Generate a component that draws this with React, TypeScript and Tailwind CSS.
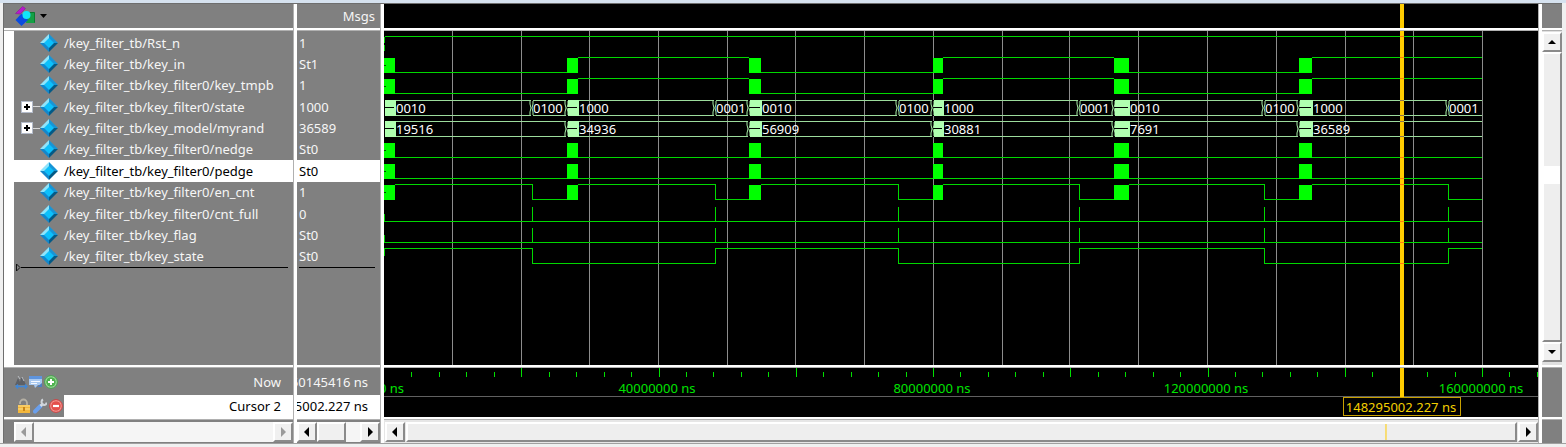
import React from "react";

type Signal = { name: string; value: string; bus?: boolean; selected?: boolean };

const SIGNALS: Signal[] = [
  { name: "/key_filter_tb/Rst_n", value: "1" },
  { name: "/key_filter_tb/key_in", value: "St1" },
  { name: "/key_filter_tb/key_filter0/key_tmpb", value: "1" },
  { name: "/key_filter_tb/key_filter0/state", value: "1000", bus: true },
  { name: "/key_filter_tb/key_model/myrand", value: "36589", bus: true },
  { name: "/key_filter_tb/key_filter0/nedge", value: "St0" },
  { name: "/key_filter_tb/key_filter0/pedge", value: "St0", selected: true },
  { name: "/key_filter_tb/key_filter0/en_cnt", value: "1" },
  { name: "/key_filter_tb/key_filter0/cnt_full", value: "0" },
  { name: "/key_filter_tb/key_flag", value: "St0" },
  { name: "/key_filter_tb/key_state", value: "St0" },
];

/* Waveform data, in drawing units from time zero. */
const END = 1098;
const CURSOR = 1016;
const BURSTS: [number, number][] = [[0, 11], [183, 194], [365, 377], [549, 559], [730, 745], [915, 928]];
const SHIFTS = [148, 331, 514, 695, 880, 1064];
const RANDS = ["19516", "34936", "56909", "30881", "7691", "36589"];
const GRID = [68, 137, 205, 274, 343, 411, 480, 549, 618, 685, 754, 823, 892, 961, 1029, 1098];

const nextBurst = (i: number) => (i + 1 < BURSTS.length ? BURSTS[i + 1][0] : END);

/* ---------- icons ---------- */

function Diamond() {
  return (
    <svg className="h-[18px] w-[18px] shrink-0" viewBox="0 0 18 18" aria-hidden="true">
      <path d="M9 0L0 9h9z" fill="#8fe4fb" />
      <path d="M9 0l9 9H9z" fill="#1795d6" />
      <path d="M0 9l9 9V9z" fill="#1287cc" />
      <path d="M18 9l-9 9V9z" fill="#045a86" />
      <path d="M9 4l5 5-5 5-5-5z" fill="#0cc0fb" />
    </svg>
  );
}

function WaveLogo() {
  return (
    <svg className="h-5 w-[21px]" viewBox="0 0 21 20" aria-hidden="true">
      <path d="M0.500 7.500L7.500 0.500l3 2L5 8z" fill="#b818cc" stroke="#8a1a99" strokeWidth="0.600" />
      <path d="M13 6.500h7V17h-9z" fill="#15a045" />
      <path d="M13 6.500h6.500v10" fill="none" stroke="#0a7a30" />
      <path d="M0.500 14L6.500 7.500 13 14l-6.500 6z" fill="#0a4be0" />
      <circle cx="11.500" cy="9" r="4" fill="#10e6fa" />
    </svg>
  );
}

function SearchMark() {
  return (
    <svg className="h-4 w-[13px]" viewBox="0 0 13 16" aria-hidden="true">
      <path d="M0 11l3-7 2 4 1-4h2l3 7z" fill="#5d6066" />
      <path d="M3 2l2 3M7 3l2 4" stroke="#b8bcc2" />
      <path d="M1 12.500h10M3 10.500l-2 2 2 2M10 10.500l2 2-2 2" stroke="#3f87d8" fill="none" strokeWidth="1.300" />
    </svg>
  );
}

function NoteMark() {
  return (
    <svg className="h-4 w-[14px]" viewBox="0 0 14 16" aria-hidden="true">
      <path d="M0 2h13v9H9l-3 3-1-3H0z" fill="#a9c9f0" />
      <path d="M0 2h13v3H0z" fill="#5e94dd" />
      <path d="M2 7.500h9M2 9.500h6" stroke="#f5f9ff" />
      <path d="M8 13l5-4v4z" fill="#4c7fc4" />
    </svg>
  );
}

function PlusMark() {
  return (
    <svg className="h-[14px] w-[14px]" viewBox="0 0 14 14" aria-hidden="true">
      <circle cx="7" cy="7" r="6.300" fill="#a9d8a5" stroke="#3fa847" />
      <circle cx="7" cy="7" r="4.800" fill="#4fb24f" />
      <path d="M7 4v6M4 7h6" stroke="#fff" strokeWidth="2" />
    </svg>
  );
}

function LockMark() {
  return (
    <svg className="h-4 w-[14px]" viewBox="0 0 14 16" aria-hidden="true">
      <path d="M3 6V5a3.500 3.500 0 0 1 7 0v3" fill="none" stroke="#b5b0a4" strokeWidth="1.800" />
      <path d="M1 7h12v8H1z" fill="#f3b73c" />
      <path d="M1 8h12M1 11h12" stroke="#ffe08a" />
      <path d="M6 9h2v4H6z" fill="#c98518" />
    </svg>
  );
}

function WrenchMark() {
  return (
    <svg className="h-4 w-[14px]" viewBox="0 0 14 16" aria-hidden="true">
      <path d="M2 13.500L7.500 8" stroke="#6a9fec" strokeWidth="4" strokeLinecap="round" />
      <path d="M7.500 8l2.500-2.500" stroke="#d9dde2" strokeWidth="2.500" />
      <path d="M10 1.500c-2 1-2 4 0 5s3.500 0 3.500-2" fill="none" stroke="#cfd4da" strokeWidth="2" />
    </svg>
  );
}

function MinusMark() {
  return (
    <svg className="h-[14px] w-[14px]" viewBox="0 0 14 14" aria-hidden="true">
      <circle cx="7" cy="7" r="6.300" fill="#f0a09a" stroke="#d8393a" />
      <circle cx="7" cy="7" r="4.800" fill="#e4504c" />
      <path d="M4 7h6" stroke="#fff" strokeWidth="2.200" />
    </svg>
  );
}

const ARROWS = {
  left: "M6 0v10L1 5z",
  right: "M2 0v10l5-5z",
  up: "M0 7h8L4 3z",
  down: "M0 3h8L4 7z",
};

function ScrollButton({ dir, label, disabled }: { dir: keyof typeof ARROWS; label: string; disabled?: boolean }) {
  return (
    <button
      type="button"
      aria-label={label}
      disabled={disabled}
      className="flex h-5 w-5 shrink-0 items-center justify-center border-2 border-t-white border-r-[#8a8a8a] border-b-[#8a8a8a] border-l-white bg-[#f0f0f0] text-black disabled:text-[#9a9a9a]"
    >
      <svg className="h-[10px] w-2" viewBox="0 0 8 10" aria-hidden="true">
        <path d={ARROWS[dir]} fill="currentColor" />
      </svg>
    </button>
  );
}

/* ---------- layout helpers ---------- */

function HSash() {
  return <div className="h-[3px] shrink-0 border-b border-[#b0b0b0] bg-white" />;
}

function VSash() {
  return <div className="w-1 shrink-0 border-l border-[#b0b0b0] bg-white" />;
}

/* ---------- waveform drawing ---------- */

function H({ x1, x2, y, c = "#00d800" }: { x1: number; x2: number; y: number; c?: string }) {
  return <rect x={x1} y={y} width={x2 - x1} height={1} fill={c} />;
}

function V({ x, y1, y2, c = "#00d800" }: { x: number; y1: number; y2: number; c?: string }) {
  return <rect x={x} y={y1} width={1} height={y2 - y1} fill={c} />;
}

function BurstBlocks({ top, height = 15 }: { top: number; height?: number }) {
  return (
    <>
      {BURSTS.map(([a, b]) => (
        <rect key={a} x={a} y={top} width={b - a} height={height} fill="#00ff00" />
      ))}
      <rect x={0} y={top + 7} width={2} height={1} fill="#005000" />
    </>
  );
}

function KeyWave({ top }: { top: number }) {
  return (
    <>
      {BURSTS.map(([, b], i) => (
        <H key={b} x1={b} x2={nextBurst(i)} y={i % 2 ? top : top + 15} />
      ))}
      <BurstBlocks top={top + 1} />
    </>
  );
}

function EdgeWave({ top }: { top: number }) {
  return (
    <>
      <H x1={0} x2={END} y={top + 15} />
      <BurstBlocks top={top + 1} />
    </>
  );
}

function EnableWave({ top }: { top: number }) {
  return (
    <>
      {BURSTS.map(([, b], i) => (
        <g key={b}>
          <H x1={b} x2={SHIFTS[i]} y={top} />
          <V x={SHIFTS[i]} y1={top} y2={top + 16} />
          <H x1={SHIFTS[i]} x2={nextBurst(i)} y={top + 15} />
        </g>
      ))}
      <BurstBlocks top={top + 1} />
    </>
  );
}

function SpikeWave({ top }: { top: number }) {
  return (
    <>
      <H x1={0} x2={END} y={top + 15} />
      <V x={0} y1={top + 8} y2={top + 15} />
      {SHIFTS.map((x) => (
        <V key={x} x={x} y1={top + 1} y2={top + 15} />
      ))}
    </>
  );
}

function StateWave({ top }: { top: number }) {
  const edges = [0, ...SHIFTS, END];
  return (
    <>
      <V x={0} y1={top + 1} y2={top + 8} />
      {edges.slice(0, -1).map((x, i) => (
        <g key={x}>
          <H x1={x} x2={edges[i + 1]} y={i % 2 ? top + 15 : top} />
          {i > 0 && <V x={x} y1={top} y2={top + 16} />}
        </g>
      ))}
    </>
  );
}

function BusWave({ top, crossings, labels }: { top: number; crossings: number[]; labels: [number, string][] }) {
  return (
    <>
      <H x1={1} x2={END} y={top} c="#9cdc9c" />
      <H x1={1} x2={END} y={top + 15} c="#9cdc9c" />
      {crossings.map((x) => (
        <g key={x}>
          <rect x={x - 1} y={top} width={2} height={16} fill="#000" />
          <path
            d={`M${x - 2} ${top + 1}v3l1 4l-1 4v3M${x + 1} ${top + 1}v3l-1 4l1 4v3`}
            fill="none"
            stroke="#a8eea8"
          />
        </g>
      ))}
      {BURSTS.map(([a, b]) => (
        <g key={a}>
          <rect x={a + 1} y={top} width={b - a} height={16} fill="#b0ffb0" />
          <rect x={a} y={top + 7} width={b - a - 1} height={1} fill="#000" />
        </g>
      ))}
      {labels.map(([x, t]) => (
        <text key={x} x={x + 1} y={top + 13} className="text-[13px]" fill="#ffffff">
          {t}
        </text>
      ))}
    </>
  );
}

function Waveform() {
  const stateLabels: [number, string][] = BURSTS.flatMap(([, b], i) => [
    [b, i % 2 ? "1000" : "0010"] as [number, string],
    [SHIFTS[i], i % 2 ? "0001" : "0100"] as [number, string],
  ]);
  const randLabels = BURSTS.map(([, b], i) => [b, RANDS[i]] as [number, string]);
  return (
    <svg className="block h-[334px] w-full" role="img" aria-label="Waveforms">
      {GRID.map((x) => (
        <rect key={x} x={x} y={0} width={1} height="100%" fill="#8c8c8c" />
      ))}
      <H x1={1} x2={END} y={5} />
      <V x={0} y1={6} y2={12} />
      <V x={0} y1={14} y2={20} />
      <KeyWave top={26} />
      <KeyWave top={47} />
      <BusWave top={69} crossings={[...SHIFTS, ...BURSTS.slice(1).map((b) => b[0])]} labels={stateLabels} />
      <BusWave top={90} crossings={BURSTS.slice(1).map((b) => b[0])} labels={randLabels} />
      <EdgeWave top={111} />
      <EdgeWave top={132} />
      <EnableWave top={153} />
      <SpikeWave top={175} />
      <SpikeWave top={196} />
      <StateWave top={217} />
      <rect x={CURSOR} y={0} width={4} height="100%" fill="#ffcc00" />
      {[5, 26, 47, 126, 147, 153, 190, 211, 232].map((y) => (
        <rect key={y} x={CURSOR} y={y} width={4} height={1} fill="#ff7a10" />
      ))}
      {[69, 84, 90, 105].map((y) => (
        <rect key={y} x={CURSOR} y={y} width={4} height={1} fill="#8f7550" />
      ))}
    </svg>
  );
}

function Timeline() {
  const ticks = Array.from({ length: 42 }, (_, i) => i + 1);
  return (
    <svg className="block h-[49px] w-full" role="img" aria-label="Time axis">
      {ticks.map((i) => {
        const major = i % 5 === 0;
        return (
          <rect
            key={i}
            x={Math.round(i * 27.45)}
            y={major ? 0 : 4}
            width={1}
            height={major ? 9 : 5}
            fill="#00e000"
          />
        );
      })}
      <g className="text-[13px]" fill="#00e400">
        <text x={-5} y={25}>0 ns</text>
        <text x={273} y={25} textAnchor="middle">40000000 ns</text>
        <text x={548} y={25} textAnchor="middle">80000000 ns</text>
        <text x={822} y={25} textAnchor="middle">120000000 ns</text>
        <text x={1097} y={25} textAnchor="middle">160000000 ns</text>
      </g>
      <rect x={0} y={28} width="100%" height={1} fill="#606060" />
      <rect x={CURSOR} y={0} width={4} height={29} fill="#ffcc00" />
      <rect x={959.500} y={29.500} width={117} height={18} fill="#000" stroke="#c8a000" />
      <text x={1017} y={44} textAnchor="middle" className="text-[13px]" fill="#f4d000">
        148295002.227 ns
      </text>
    </svg>
  );
}

/* ---------- panes ---------- */

function NamesPane() {
  return (
    <section aria-label="Signals" className="flex w-[289px] shrink-0 flex-col">
      <header className="flex h-6 items-center pl-[11px]">
        <button type="button" aria-label="Wave menu" className="flex items-center gap-1">
          <WaveLogo />
          <svg className="h-1 w-[7px]" viewBox="0 0 7 4" aria-hidden="true">
            <path d="M0 0h7L3.500 4z" fill="#000" />
          </svg>
        </button>
      </header>
      <HSash />
      <div className="flex flex-1">
        <div className="w-[10px] shrink-0 bg-white" />
        <div className="flex-1 pt-px">
          <ul className="grid h-[235px] grid-rows-11">
            {SIGNALS.map((s) => (
              <li
                key={s.name}
                className={`flex items-center whitespace-nowrap ${s.selected ? "bg-white text-black" : ""}`}
              >
                <span className="flex w-[26px] items-center pl-[7px]">
                  {s.bus && (
                    <>
                      <button
                        type="button"
                        aria-label={`Expand ${s.name}`}
                        className="flex h-3 w-3 shrink-0 items-center justify-center border border-[#b4bccb] bg-white"
                      >
                        <svg className="h-[6px] w-[6px]" viewBox="0 0 6 6" aria-hidden="true">
                          <path d="M2 0h2v2h2v2H4v2H2V4H0V2h2z" fill="#000" />
                        </svg>
                      </button>
                      <span className="h-px flex-1 bg-[#d8d8d8]" />
                    </>
                  )}
                </span>
                <Diamond />
                <span className="pl-[6px]">{s.name}</span>
              </li>
            ))}
          </ul>
          <div className="-mt-1 flex items-center pr-[5px] pl-[2px]">
            <svg className="h-[9px] w-[5px]" viewBox="0 0 5 9" aria-hidden="true">
              <path d="M0.500 1v7L4 4.500z" fill="none" stroke="#111" />
            </svg>
            <div className="h-px flex-1 bg-black" />
          </div>
        </div>
      </div>
      <HSash />
      <footer className="flex h-[49px] flex-col">
        <div className="flex flex-1 items-center justify-between pr-3 pl-[11px]">
          <div className="flex items-center gap-px">
            <button type="button" aria-label="Find"><SearchMark /></button>
            <button type="button" aria-label="Edit grid"><NoteMark /></button>
            <button type="button" aria-label="Add cursor"><PlusMark /></button>
          </div>
          <span>Now</span>
        </div>
        <div className="flex h-[22px]">
          <div className="flex w-[60px] items-center justify-end gap-[2px] pr-px">
            <button type="button" aria-label="Lock cursor"><LockMark /></button>
            <button type="button" aria-label="Cursor properties"><WrenchMark /></button>
            <button type="button" aria-label="Delete cursor"><MinusMark /></button>
          </div>
          <div className="flex flex-1 items-center justify-end bg-white pr-3 text-black">Cursor 2</div>
        </div>
      </footer>
      <HSash />
      <div className="flex h-[23px] items-center pl-[10px]">
        <ScrollButton dir="left" label="Scroll names left" disabled />
        <div className="h-5 flex-1 bg-[#f5f5f5]" />
        <ScrollButton dir="right" label="Scroll names right" disabled />
      </div>
    </section>
  );
}

function ValuesPane() {
  return (
    <section aria-label="Values" className="flex w-[83px] shrink-0 flex-col">
      <header className="flex h-6 items-center justify-end pr-[5px]">Msgs</header>
      <HSash />
      <div className="flex-1 pt-px">
        <ul className="grid h-[235px] grid-rows-11">
          {SIGNALS.map((s) => (
            <li key={s.name} className={`flex items-center pl-[2px] ${s.selected ? "bg-white text-black" : ""}`}>
              {s.value}
            </li>
          ))}
        </ul>
        <div className="mr-[5px] ml-[2px] h-px bg-black" />
      </div>
      <HSash />
      <footer className="flex h-[49px] flex-col whitespace-nowrap">
        <div className="flex flex-1 items-center justify-end overflow-hidden pr-3">160145416 ns</div>
        <div className="flex h-[22px] items-center justify-end overflow-hidden bg-white pr-3 text-black">
          148295002.227 ns
        </div>
      </footer>
      <HSash />
      <div className="flex h-[23px] items-center">
        <ScrollButton dir="left" label="Scroll values left" />
        <div className="flex h-5 flex-1 bg-[#f5f5f5] pr-[14px]">
          <div className="flex-1 border-2 border-t-white border-r-[#8a8a8a] border-b-[#8a8a8a] border-l-white bg-[#f0f0f0]" />
        </div>
        <ScrollButton dir="right" label="Scroll values right" />
      </div>
    </section>
  );
}

function WavePane() {
  return (
    <section aria-label="Wave" className="flex min-w-0 flex-1 flex-col bg-black">
      <svg className="block h-6 w-full" aria-hidden="true">
        <rect x={CURSOR} y={0} width={4} height={24} fill="#ffcc00" />
      </svg>
      <HSash />
      <div className="flex-1">
        <Waveform />
      </div>
      <HSash />
      <Timeline />
      <HSash />
      <div className="flex h-[23px] items-center gap-px bg-[#e6e6e6] pl-px">
        <ScrollButton dir="left" label="Scroll waves left" />
        <div className="relative h-5 flex-1 border-2 border-t-white border-r-[#8a8a8a] border-b-[#8a8a8a] border-l-white bg-[#eeeeee]">
          <svg className="absolute inset-0 h-full w-full" aria-hidden="true">
            <rect x="88.300%" y={0} width={1} height="100%" fill="#ffcc00" />
          </svg>
        </div>
        <ScrollButton dir="right" label="Scroll waves right" />
      </div>
    </section>
  );
}

function VerticalScroll() {
  return (
    <div className="flex w-5 shrink-0 flex-col">
      <div className="h-6" />
      <HSash />
      <div className="flex flex-1 flex-col bg-[#e0e0e0] pt-px pb-[3px]">
        <ScrollButton dir="up" label="Scroll up" />
        <div className="flex flex-1 flex-col border-2 border-t-white border-r-[#8a8a8a] border-b-[#8a8a8a] border-l-white bg-[#eeeeee]">
          <div className="mt-[112px] h-[18px] bg-white" />
        </div>
        <ScrollButton dir="down" label="Scroll down" />
      </div>
      <HSash />
      <div className="h-[49px]" />
      <HSash />
      <div className="h-[23px]" />
    </div>
  );
}

export default function App() {
  return (
    <main className="flex min-h-screen flex-col bg-[#f0f0f0] font-['Noto_Sans',sans-serif] text-[13px] leading-4 text-[#f6f6f6]">
      <div className="h-[3px] bg-[#d6e2ef]" />
      <div className="mr-1 ml-[3px] flex flex-1 border-t border-l border-[#6e6e6e] bg-[#808080]">
        <NamesPane />
        <VSash />
        <ValuesPane />
        <VSash />
        <WavePane />
        <VSash />
        <VerticalScroll />
      </div>
      <div className="h-1 border-t border-[#a0a0a0]" />
    </main>
  );
}
